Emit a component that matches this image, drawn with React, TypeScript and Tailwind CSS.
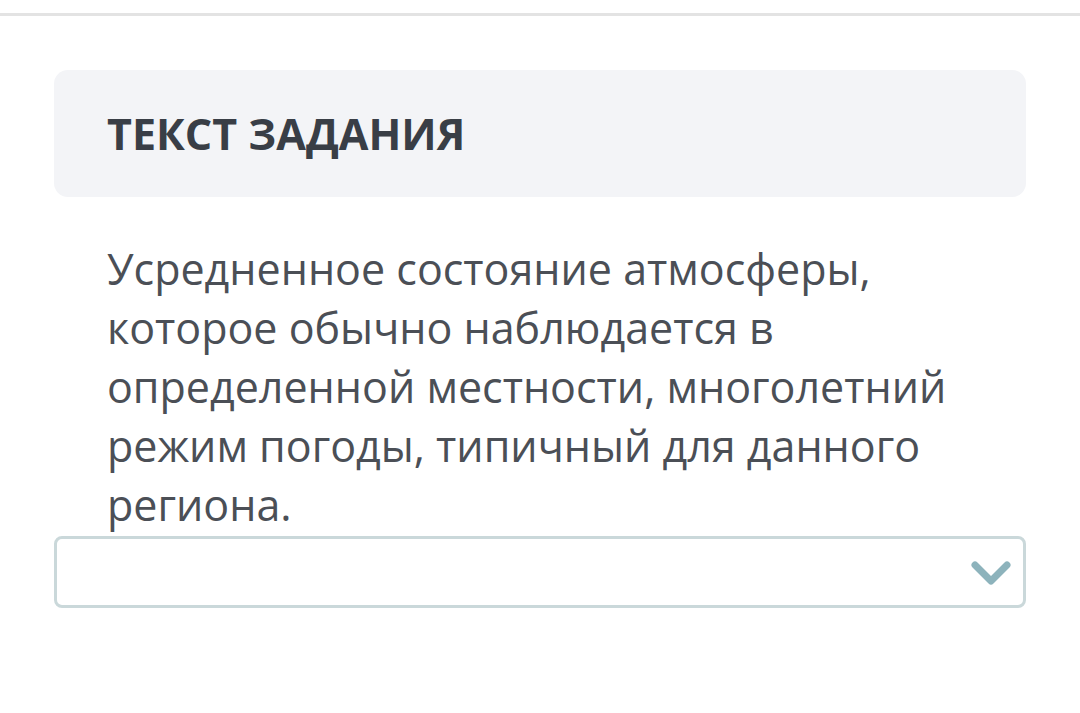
export default function App() {
  return (
    <div className="min-h-screen bg-white font-['Open_Sans',sans-serif]">
      <div className="pt-[13px]">
        <div className="h-[3px] bg-[#e3e3e3]" />
      </div>
      <div className="px-[54px] pt-[54px]">
        {/* Task header */}
        <div className="h-[127px] rounded-[14px] bg-[#f3f4f7] flex items-center px-[53px]">
          <h2 className="text-[43px] font-bold text-[#393e46] leading-none">ТЕКСТ ЗАДАНИЯ</h2>
        </div>

        {/* Task text */}
        <p className="mt-[42px] px-[53px] text-[43px] leading-[59px] text-[#4b4f56]">
          Усредненное состояние атмосферы, которое обычно наблюдается в определенной местности, многолетний режим погоды, типичный для данного региона.
        </p>

        {/* Answer select */}
        <div className="mt-[2px] h-[72px] rounded-[8px] border-[3px] border-[#cad8da] flex items-center justify-end pr-[11px]">
          <svg width="42" height="28" viewBox="0 0 42 28" fill="none" className="mt-[2px]">
            <path d="M5 6 L21 22 L37 6" stroke="#8db3bc" strokeWidth="7" strokeLinecap="round" strokeLinejoin="round" />
          </svg>
        </div>
      </div>
    </div>
  );
}
